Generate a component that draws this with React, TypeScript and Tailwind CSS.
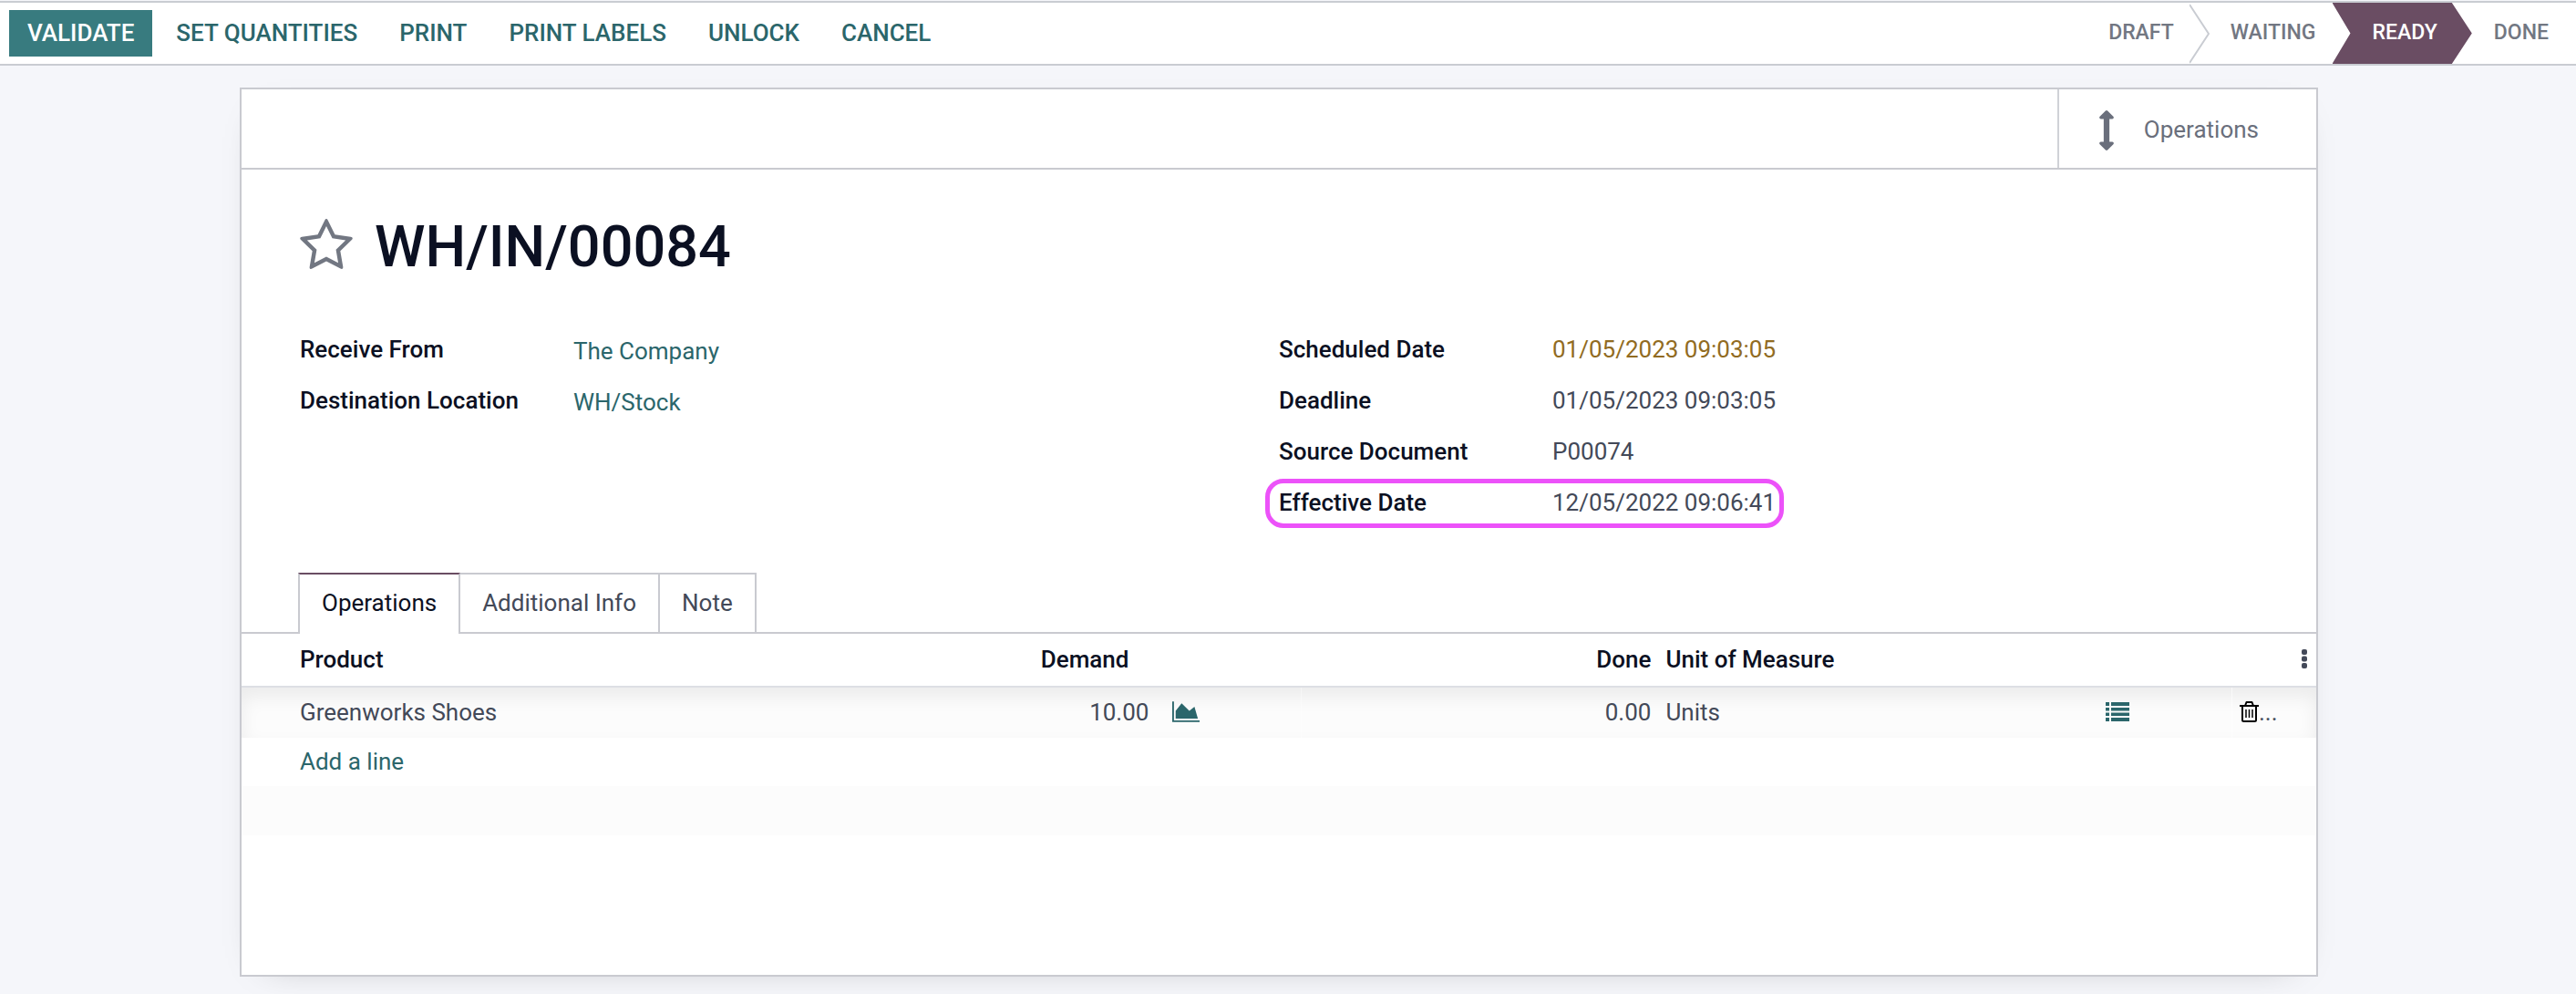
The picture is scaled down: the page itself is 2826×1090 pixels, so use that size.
import type { ReactNode } from "react";

function StarIcon() {
  return (
    <svg viewBox="0 0 1792 1792" className="size-[62px]" fill="currentColor" aria-hidden="true">
      <path d="M1201 1004l306-297-422-62-189-382-189 382-422 62 306 297-73 421 378-199 377 199zm527-357q0 22-26 48l-363 354 86 500q1 7 1 20 0 50-41 50-19 0-40-12l-449-236-449 236q-22 12-40 12-21 0-31.5-14.5t-10.5-35.5q0-6 2-20l86-500-364-354q-25-27-25-48 0-37 56-46l502-73 225-455q19-41 49-41t49 41l225 455 502 73q56 9 56 46z" />
    </svg>
  );
}

function ArrowsVerticalIcon() {
  return (
    <svg viewBox="576 0 640 1792" className="h-11 w-4" fill="currentColor" aria-hidden="true">
      <path d="M1216 320q0 26-19 45t-45 19h-128v1024h128q26 0 45 19t19 45-19 45l-256 256q-19 19-45 19t-45-19l-256-256q-19-19-19-45t19-45 45-19h128v-1024h-128q-26 0-45-19t-19-45 19-45l256-256q19-19 45-19t45 19l256 256q19 19 19 45z" />
    </svg>
  );
}

function AreaChartIcon() {
  return (
    <svg viewBox="0 128 2048 1536" className="h-[23px] w-[30px]" fill="currentColor" aria-hidden="true">
      <path d="M2048 1536v128h-2048v-1536h128v1408h1920zm-384-1024l256 896h-1664v-576l448-576 576 576z" />
    </svg>
  );
}

function ListIcon() {
  return (
    <svg viewBox="0 0 26 21" className="h-[21px] w-[26px]" fill="currentColor" aria-hidden="true">
      <path d="M0 0h4v4H0zM6 0h20v4H6zM0 6h4v3.500H0zM6 6h20v3.500H6zM0 11.500h4v3.500H0zM6 11.500h20v3.500H6zM0 17h4v4H0zM6 17h20v4H6z" />
    </svg>
  );
}

function TrashIcon() {
  return (
    <svg viewBox="0 0 21 23" className="h-[23px] w-[21px]" fill="none" stroke="currentColor" aria-hidden="true">
      <path d="M0 5h21" strokeWidth="2" />
      <path d="M6 5l1.500-4h6l1.500 4" strokeWidth="2" strokeLinejoin="round" />
      <path d="M3 5v15.500q0 1.500 1.500 1.500h12q1.500 0 1.500-1.500V5" strokeWidth="2" />
      <path d="M7 9v9M10.500 9v9M14 9v9" strokeWidth="1.500" />
    </svg>
  );
}

function KebabIcon() {
  return (
    <svg viewBox="0 0 6 21" className="h-[21px] w-1.5" fill="currentColor" aria-hidden="true">
      <rect width="6" height="6" rx="2" />
      <rect y="7.500" width="6" height="6" rx="2" />
      <rect y="15" width="6" height="6" rx="2" />
    </svg>
  );
}

function Field({ label, children, marked }: { label: string; children: ReactNode; marked?: boolean }) {
  return (
    <div className="relative flex h-14 w-fit items-center">
      <dt className="w-[300px] font-medium text-[#0b1022]">{label}</dt>
      <dd>{children}</dd>
      {marked && (
        <span className="pointer-events-none absolute top-0.5 bottom-0 -left-[15px] -right-[9px] rounded-[20px] border-5 border-[#ec52f9]" />
      )}
    </div>
  );
}

const actions = ["SET QUANTITIES", "PRINT", "PRINT LABELS", "UNLOCK", "CANCEL"];

export default function App() {
  return (
    <div className="min-h-screen bg-[#f5f6fa] pb-[19px] font-[Roboto,sans-serif] text-[26px] leading-8 text-[#434958]">
      <header className="pt-px">
        <div className="flex h-[71px] items-stretch justify-between border-y-2 border-[#c9ccd2] bg-white">
          <div className="flex items-start gap-1.5 pt-2 pl-2.5 font-medium text-[#2b666b]">
            <button className="h-[51px] bg-[#387b7f] px-5 pb-0.5 text-white">VALIDATE</button>
            {actions.map((a) => (
              <button key={a} className="h-[51px] px-5 pb-0.5">
                {a}
              </button>
            ))}
          </div>
          <div className="flex items-center pr-[30px] text-[23px] font-medium text-[#727782]">
            <button className="pb-0.5">DRAFT</button>
            <svg viewBox="0 0 22 66" className="mr-[23px] ml-[17px] h-[66px] w-[22px]" fill="none" stroke="#c9ccd2" strokeWidth="2" aria-hidden="true">
              <path d="M0 1L21 33L0 65" />
            </svg>
            <button className="pb-0.5">WAITING</button>
            <button
              aria-current="step"
              className="mr-6 ml-[18px] h-full bg-[#6a4d63] pr-[38px] pb-0.5 pl-11 text-white [clip-path:polygon(0_0,calc(100%-22px)_0,100%_50%,calc(100%-22px)_100%,0_100%,20px_50%)]"
            >
              READY
            </button>
            <button className="pb-0.5">DONE</button>
          </div>
        </div>
      </header>

      <div className="pt-6 pr-5">
        <main className="mx-auto min-h-[975px] max-w-[2280px] border-2 border-[#c9cad0] bg-white shadow-[0_10px_40px_-30px_rgba(0,0,0,0.4)]">
          <div className="flex h-22 justify-end border-b-2 border-[#c9cad0]">
            <button className="flex items-center border-l-2 border-[#d0d2d7] pt-0.5 pr-[63px] pl-11 text-[#6a6f7c]">
              <span className="mr-[33px] pt-0.5">
                <ArrowsVerticalIcon />
              </span>
              Operations
            </button>
          </div>

          <div className="px-16 pt-11">
            <h1 className="flex h-20 items-center gap-[22px] text-[63px] leading-[80px] font-medium text-[#0b1022]">
              <button aria-label="Mark as favorite" className="-ml-0.5 text-[#727782]">
                <StarIcon />
              </button>
              <span className="pt-0.5">WH/IN/00084</span>
            </h1>
            <div className="mt-[45px] grid grid-cols-2">
              <dl>
                <Field label="Receive From">
                  <a href="#" className="block pt-1 text-[#2b666b]">The Company</a>
                </Field>
                <Field label="Destination Location">
                  <a href="#" className="block pt-1 text-[#2b666b]">WH/Stock</a>
                </Field>
              </dl>
              <dl>
                <Field label="Scheduled Date">
                  <span className="text-[#916b22]">01/05/2023 09:03:05</span>
                </Field>
                <Field label="Deadline">01/05/2023 09:03:05</Field>
                <Field label="Source Document">P00074</Field>
                <Field label="Effective Date" marked>12/05/2022 09:06:41</Field>
              </dl>
            </div>
          </div>

          <div role="tablist" className="mt-[49px] flex h-[67px] border-b-2 border-[#c9cad0] pl-[62px]">
            <button role="tab" aria-selected="true" className="z-10 -mb-0.5 border-x-2 border-t-2 border-[#c9cad0] border-t-[#6a4d63] bg-white px-6 pb-1 text-[#0b1022]">
              Operations
            </button>
            <button role="tab" aria-selected="false" className="-ml-0.5 border-x-2 border-t-2 border-[#c9cad0] px-6 pb-0.5">
              Additional Info
            </button>
            <button role="tab" aria-selected="false" className="-ml-0.5 border-x-2 border-t-2 border-[#c9cad0] px-6 pb-0.5">
              Note
            </button>
          </div>

          <table className="w-full table-fixed border-separate border-spacing-0">
            <colgroup>
              <col className="w-[22%]" />
              <col className="w-[22%]" />
              <col className="w-[162px]" />
              <col className="w-[391px]" />
              <col />
              <col className="w-[147px]" />
              <col className="w-[92px]" />
            </colgroup>
            <thead>
              <tr className="h-[59px] text-[#0b1022] *:border-b-2 *:border-[#dddfe4] *:pb-0.5 *:font-medium">
                <th className="pl-16 text-left">Product</th>
                <th className="pr-7 text-right">Demand</th>
                <td />
                <th className="pr-2 text-right">Done</th>
                <th className="pl-2 text-left">Unit of Measure</th>
                <td />
                <td>
                  <button aria-label="Optional columns" className="mr-2.5 ml-auto block text-[#434958]">
                    <KebabIcon />
                  </button>
                </td>
              </tr>
            </thead>
            <tbody>
              <tr className="h-[55px] bg-[#fcfcfc] shadow-[inset_0_10px_20px_rgba(0,0,0,0.07)] *:pb-0.5">
                <td className="pl-16">Greenworks Shoes</td>
                <td className="pr-1.5 text-right">10.00</td>
                <td className="border-r border-white/40 pl-5">
                  <button aria-label="Forecast report" className="block text-[#2b666b]">
                    <AreaChartIcon />
                  </button>
                </td>
                <td className="pr-2 text-right">0.00</td>
                <td className="pl-2">Units</td>
                <td className="border-r border-white/60 pl-2">
                  <button aria-label="Detailed operations" className="block text-[#2b666b]">
                    <ListIcon />
                  </button>
                </td>
                <td className="pl-2">
                  <div className="flex items-center">
                    <button aria-label="Delete line" className="text-black">
                      <TrashIcon />
                    </button>
                    <span>...</span>
                  </div>
                </td>
              </tr>
              <tr className="h-[53px]">
                <td colSpan={7} className="pb-0.5 pl-16">
                  <a href="#" className="text-[#2b666b]">Add a line</a>
                </td>
              </tr>
              <tr className="h-[54px] bg-[#fcfcfc]">
                <td colSpan={7} />
              </tr>
            </tbody>
          </table>
        </main>
      </div>
    </div>
  );
}
